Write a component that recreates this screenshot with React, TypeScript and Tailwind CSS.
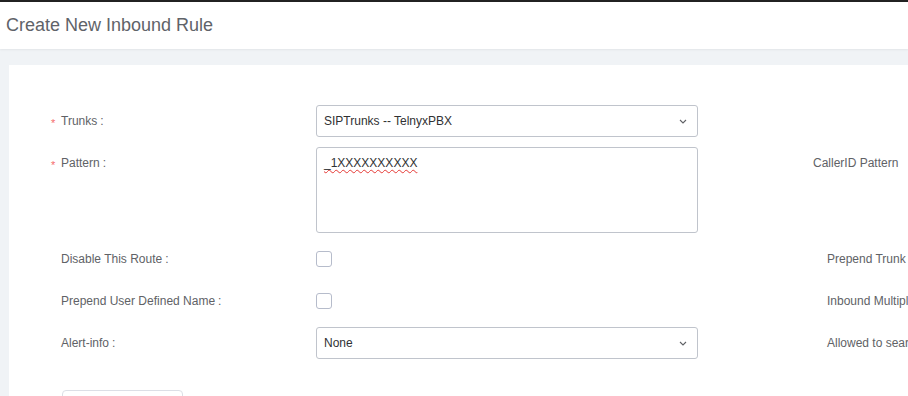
import React from "react";

function Chevron() {
  return (
    <svg width="8" height="5" viewBox="0 0 8 5" fill="none" className="shrink-0">
      <path d="M1 1l3 3 3-3" stroke="#606266" strokeWidth="1.1" />
    </svg>
  );
}

function Label({ text, required }: { text: string; required?: boolean }) {
  return (
    <div className="relative flex h-8 w-[255px] shrink-0 items-center text-[12px] text-[#606266]">
      {required && <span className="absolute -left-[10px] top-[10px] text-[11px] text-[#f56c6c]">*</span>}
      <span>{text}</span>
      <span className="ml-[3px]">:</span>
    </div>
  );
}

function Select({ value }: { value: string }) {
  return (
    <div className="flex h-8 w-[382px] items-center justify-between rounded-[3px] border border-[#c0c4cc] bg-white pl-[7px] pr-[10px] text-[12px] text-[#303133]">
      <span>{value}</span>
      <Chevron />
    </div>
  );
}

function Checkbox() {
  return <div className="h-4 w-4 rounded-[3px] border border-[#b6bccb] bg-white" />;
}

function Row({ label, required, children, right, rightOffset }: { label: string; required?: boolean; children: React.ReactNode; right?: string; rightOffset?: boolean }) {
  return (
    <div className="flex items-start">
      <Label text={label} required={required} />
      <div className="flex h-full w-[382px] shrink-0 items-start">
        {children}
      </div>
      {right && (
        <div className={`flex h-8 items-center whitespace-nowrap text-[12px] text-[#606266] ${rightOffset ? "ml-[115px]" : "ml-[129px]"}`}>
          {right}
        </div>
      )}
    </div>
  );
}

export default function App() {
  return (
    <div className="h-[396px] w-[908px] overflow-hidden bg-[#f0f3f6] font-['Liberation_Sans',Arial,sans-serif]">
      <div className="h-[2px] bg-[#222]" />
      <div className="flex h-[47px] items-center bg-white pl-[6px] shadow-[0_1px_2px_rgba(0,0,0,0.06)]">
        <h1 className="text-[18px] text-[#5f6369]">Create New Inbound Rule</h1>
      </div>
      <div className="ml-[9px] mt-4 h-full bg-white pl-[52px] pt-10">
        <div className="flex flex-col gap-[10px]">
          <Row label="Trunks" required>
            <Select value="SIPTrunks -- TelnyxPBX" />
          </Row>
          <Row label="Pattern" required right="CallerID Pattern" rightOffset>
            <div className="h-[86px] w-[382px] rounded-[3px] border border-[#c0c4cc] bg-white px-[7px] pt-[6px] text-[12px] text-[#303133]">
              <span className="underline decoration-[#e53935] decoration-wavy decoration-1 underline-offset-2">_1XXXXXXXXXX</span>
            </div>
          </Row>
          <Row label="Disable This Route" right="Prepend Trunk Name">
            <div className="flex h-8 items-center">
              <Checkbox />
            </div>
          </Row>
          <Row label="Prepend User Defined Name" right="Inbound Multiple Mode">
            <div className="flex h-8 items-center">
              <Checkbox />
            </div>
          </Row>
          <Row label="Alert-info" right="Allowed to search">
            <Select value="None" />
          </Row>
        </div>
        <div className="ml-px mt-[31px] h-8 w-[121px] rounded-[4px] border border-[#dcdfe6] bg-white" />
      </div>
    </div>
  );
}
